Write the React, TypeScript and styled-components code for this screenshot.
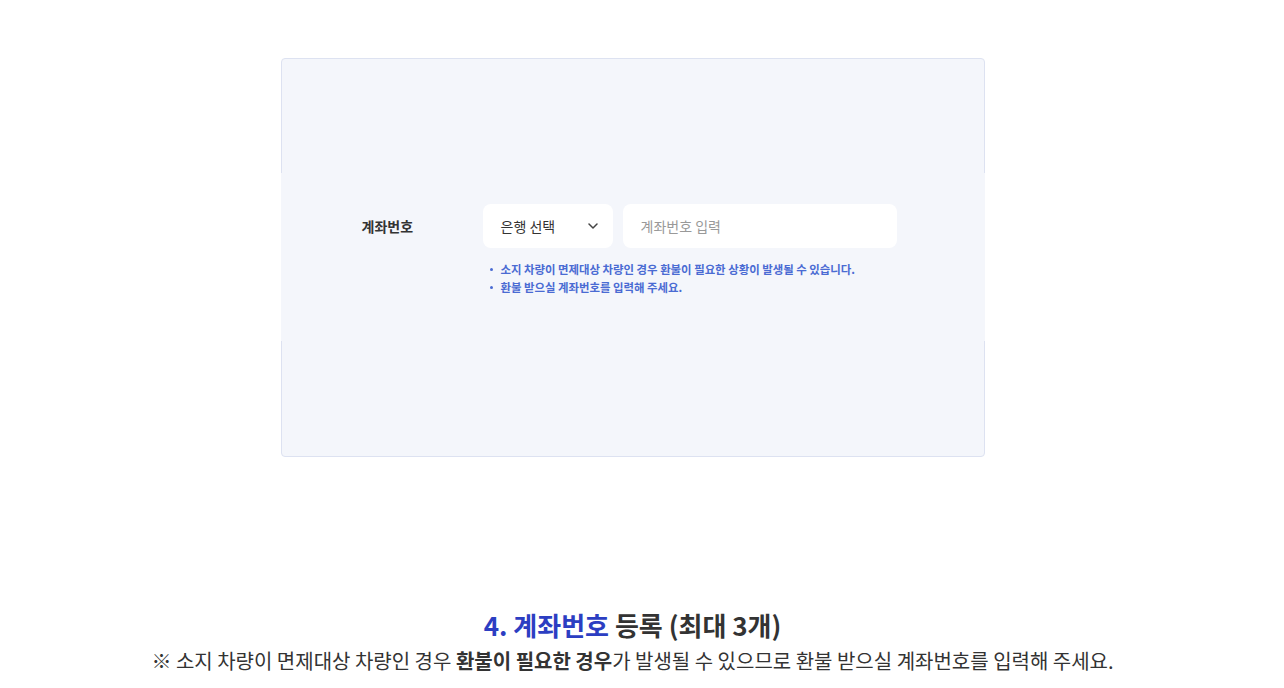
import { FC } from 'react'
import styled, { createGlobalStyle } from 'styled-components'

const GlobalStyle = createGlobalStyle`
  body {
    margin: 0;
    background: #fff;
    font-family: 'Noto Sans CJK KR', 'Noto Sans', sans-serif;
    color: #333;
  }
`

const notes = [
  '소지 차량이 면제대상 차량인 경우 환불이 필요한 상황이 발생될 수 있습니다.',
  '환불 받으실 계좌번호를 입력해 주세요.',
]

const ChevronDown: FC = () => (
  <svg width="10" height="6" viewBox="0 0 10 6" fill="none">
    <path d="M1 1l4 4 4-4" stroke="#444" strokeWidth="1.5" strokeLinecap="round" strokeLinejoin="round" />
  </svg>
)

export default function App() {
  return (
    <>
      <GlobalStyle />
      <Page>
        <Card>
          <AccountRow>
            <Label>계좌번호</Label>
            <Fields>
              <Inputs>
                <BankSelect>
                  <span>은행 선택</span>
                  <ChevronDown />
                </BankSelect>
                <AccountInput placeholder="계좌번호 입력" />
              </Inputs>
              <NoteList>
                {notes.map((note) => (
                  <Note key={note}>{note}</Note>
                ))}
              </NoteList>
            </Fields>
          </AccountRow>
        </Card>
        <Section>
          <Title>
            <Accent>4. 계좌번호</Accent> 등록 (최대 3개)
          </Title>
          <Desc>
            ※ 소지 차량이 면제대상 차량인 경우 <strong>환불이 필요한 경우</strong>가 발생될 수 있으므로 환불 받으실 계좌번호를 입력해 주세요.
          </Desc>
        </Section>
      </Page>
    </>
  )
}

const Page = styled.div`
  display: flex;
  flex-direction: column;
  align-items: center;
  padding: 58px 19px 0 0;
`

const Card = styled.div`
  width: 702px;
  padding: 114px 0 115px;
  background: #f4f6fb;
  border: 1px solid #dde2f1;
  border-radius: 4px;
`

const AccountRow = styled.div`
  display: flex;
  align-items: flex-start;
  margin: 0 -1px;
  padding: 31px 0 45px 81px;
  background: #f4f6fb;
`

const Label = styled.div`
  width: 121px;
  line-height: 44px;
  font-size: 14px;
  font-weight: 700;
  color: #333;
`

const Fields = styled.div`
  display: flex;
  flex-direction: column;
`

const Inputs = styled.div`
  display: flex;
  gap: 10px;
`

const BankSelect = styled.div`
  box-sizing: border-box;
  width: 130px;
  height: 44px;
  padding: 0 15px 0 18px;
  display: flex;
  align-items: center;
  justify-content: space-between;
  background: #fff;
  border-radius: 8px;
  font-size: 14px;
  color: #333;
`

const AccountInput = styled.input`
  box-sizing: border-box;
  width: 274px;
  height: 44px;
  padding: 0 18px;
  border: none;
  outline: none;
  background: #fff;
  border-radius: 8px;
  font-family: inherit;
  font-size: 14px;
  color: #333;

  &::placeholder {
    color: #999;
  }
`

const NoteList = styled.ul`
  list-style: none;
  margin: 12px 0 0;
  padding: 0;
`

const Note = styled.li`
  position: relative;
  padding-left: 18px;
  font-size: 11.4px;
  font-weight: 700;
  line-height: 18px;
  color: #4a6bd3;

  &::before {
    content: '';
    position: absolute;
    left: 7px;
    top: 8px;
    width: 3px;
    height: 3px;
    border-radius: 50%;
    background: #4a6bd3;
  }
`

const Section = styled.div`
  margin-top: 150px;
  display: flex;
  flex-direction: column;
  align-items: center;
`

const Title = styled.h2`
  margin: 0;
  font-size: 26px;
  font-weight: 700;
  line-height: 36px;
  color: #333;
`

const Accent = styled.span`
  color: #2c3ec2;
`

const Desc = styled.p`
  margin: 0;
  font-size: 20px;
  line-height: 36px;
  color: #333;

  strong {
    font-weight: 700;
  }
`
